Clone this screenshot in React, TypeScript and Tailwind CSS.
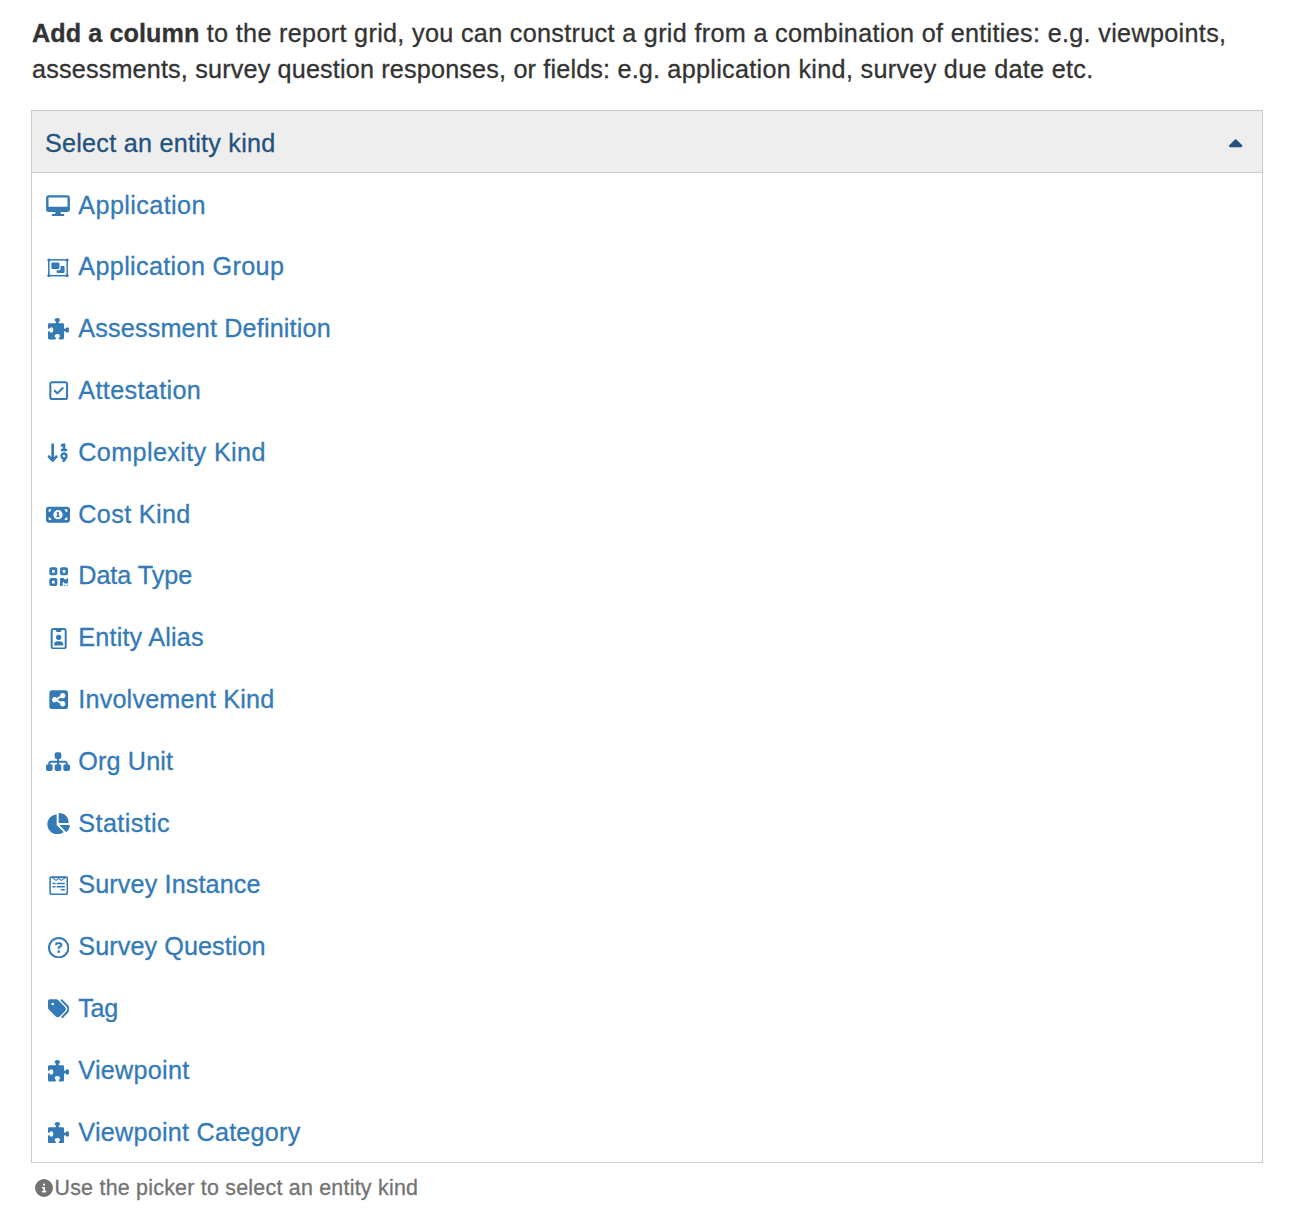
import { FaRegSquareCheck, FaArrowDown19, FaMoneyBill1, FaQrcode, FaRegIdBadge, FaSquareShareNodes, FaSitemap, FaChartPie, FaWpforms, FaRegCircleQuestion, FaTags, FaCircleInfo, FaCaretUp } from "react-icons/fa6";

type IconProps = { className?: string };

function Desktop({ className }: IconProps) {
  return (
    <svg viewBox="0 0 24 21.4" className={className} fill="currentColor">
      <path
        fillRule="evenodd"
        d="M2.8 0.2H21.2A2.7 2.7 0 0 1 23.9 2.9V14.2A2.7 2.7 0 0 1 21.2 16.9H2.8A2.7 2.7 0 0 1 0.1 14.2V2.9A2.7 2.7 0 0 1 2.8 0.2ZM2.5 2.6V11.7H21.5V2.6Z"
      />
      <path d="M9.6 16.5H14.4L14.9 19H17.2A1.1 1.1 0 0 1 17.2 21.2H6.8A1.1 1.1 0 0 1 6.8 19H9.1Z" />
    </svg>
  );
}

function ObjectGroup({ className }: IconProps) {
  return (
    <svg viewBox="0 0 24 21.4" className={className} fill="currentColor">
      <rect x="2.8" y="2.9" width="18.4" height="15.8" fill="none" stroke="currentColor" strokeWidth="1.5" />
      <circle cx="2.9" cy="3" r="1.6" />
      <circle cx="21.1" cy="3" r="1.6" />
      <circle cx="2.9" cy="18.6" r="1.6" />
      <circle cx="21.1" cy="18.6" r="1.6" />
      <rect x="5.4" y="5.4" width="8" height="6.7" rx="1.2" />
      <path d="M14.6 9.1H17.4A1.2 1.2 0 0 1 18.6 10.3V14.8A1.2 1.2 0 0 1 17.4 16H11.8A1.2 1.2 0 0 1 10.6 14.8V13.3H13.2A1.4 1.4 0 0 0 14.6 11.9Z" />
    </svg>
  );
}

function Puzzle({ className }: IconProps) {
  return (
    <svg viewBox="0 0 512 512" className={className} fill="currentColor">
      <path d="M512 288c0 35.35-21.49 64-48 64c-32.43 0-31.72-32-55.64-32C394.9 320 384 330.9 384 344.4V480c0 17.67-14.33 32-32 32h-71.64C266.9 512 256 501.1 256 487.6C256 463.1 288 464.4 288 432c0-26.51-28.65-48-64-48s-64 21.49-64 48c0 32.43 32 31.72 32 55.64C192 501.1 181.1 512 167.6 512H32c-17.67 0-32-14.33-32-32v-135.6C0 330.9 10.91 320 24.36 320C48.05 320 47.6 352 80 352C106.5 352 128 323.3 128 288S106.5 224 80 224c-32.43 0-31.72 32-55.64 32C10.91 256 0 245.1 0 231.6v-71.64c0-17.67 14.33-32 32-32h135.6C181.1 128 192 117.1 192 103.6c0-23.69-32-23.24-32-55.64c0-26.51 28.65-48 64-48s64 21.49 64 48c0 32.43-32 31.72-32 55.64c0 13.45 10.91 24.36 24.36 24.36H352c17.67 0 32 14.33 32 32v71.64c0 13.45 10.91 24.36 24.36 24.36c23.69 0 23.24-32 55.64-32C490.5 224 512 252.7 512 288z" />
    </svg>
  );
}

const wide = "h-[21.4px] w-[24px]";
const square = "h-[21.4px] w-[21.4px]";

const kinds = [
  { name: "Application", Icon: Desktop, size: wide, tracking: "tracking-[0.39px]" },
  { name: "Application Group", Icon: ObjectGroup, size: wide, tracking: "tracking-[0.34px]" },
  { name: "Assessment Definition", Icon: Puzzle, size: square, tracking: "tracking-[0.16px]" },
  { name: "Attestation", Icon: FaRegSquareCheck, size: square, tracking: "tracking-[0.35px]" },
  { name: "Complexity Kind", Icon: FaArrowDown19, size: wide, tracking: "tracking-[0.37px]" },
  { name: "Cost Kind", Icon: FaMoneyBill1, size: wide, tracking: "tracking-[0.35px]" },
  { name: "Data Type", Icon: FaQrcode, size: square, tracking: "tracking-[-0.06px]" },
  { name: "Entity Alias", Icon: FaRegIdBadge, size: square, tracking: "tracking-[0.18px]" },
  { name: "Involvement Kind", Icon: FaSquareShareNodes, size: square, tracking: "tracking-[0.18px]" },
  { name: "Org Unit", Icon: FaSitemap, size: wide, tracking: "tracking-[0.14px]" },
  { name: "Statistic", Icon: FaChartPie, size: wide, tracking: "tracking-[0.4px]" },
  { name: "Survey Instance", Icon: FaWpforms, size: square, tracking: "tracking-[0.12px]" },
  { name: "Survey Question", Icon: FaRegCircleQuestion, size: square, tracking: "tracking-[0.08px]" },
  { name: "Tag", Icon: FaTags, size: square, tracking: "tracking-[-0.3px]" },
  { name: "Viewpoint", Icon: Puzzle, size: square, tracking: "tracking-[0.27px]" },
  { name: "Viewpoint Category", Icon: Puzzle, size: square, tracking: "tracking-[0.24px]" },
];

export default function App() {
  return (
    <div className="h-[1208px] bg-white pl-[31px] pr-[27px] pt-[15px] font-['Liberation_Sans',sans-serif] text-[25.2px] leading-[36px] text-[#333] [-webkit-text-stroke:0.3px]">
      <p className="ml-px whitespace-nowrap">
        <b className="tracking-[0.08px]">Add a column</b>
        <span className="tracking-[0.32px]"> to the report grid, you can construct a grid from a combination of entities: e.g. viewpoints,</span>
        <br />
        <span className="tracking-[0.17px]">assessments, survey question responses, or fields: e.g. </span>
        <span className="tracking-[0.31px]">application kind, survey due date etc.</span>
      </p>
      <div className="mt-[23px] border border-[#ccc]">
        <div className="flex h-[62px] items-center justify-between border-b border-[#ccc] bg-[#eee] pl-[13px] pr-[15.5px] pt-[2px] text-[#23527c]">
          <span className="tracking-[0.24px]">Select an entity kind</span>
          <FaCaretUp className="mt-[4px] h-[21.4px] w-[21.4px]" />
        </div>
        <ul className="grid h-[989px] grid-rows-16">
          {kinds.map(({ name, Icon, size, tracking }) => (
            <li key={name} className="flex items-center gap-[6.5px] pl-[13px] pt-[1.3px] text-[#337ab7]">
              <span className="flex w-[26.8px] justify-center pt-[2px]">
                <Icon className={size} />
              </span>
              <span className={tracking}>{name}</span>
            </li>
          ))}
        </ul>
      </div>
      <div className="mt-[7px] flex items-center gap-[2px] pl-[3.5px] text-[21.4px] text-[#737373]">
        <FaCircleInfo className="h-[18px] w-[18px]" />
        <span className="tracking-[0.24px]">Use the picker to select an entity kind</span>
      </div>
    </div>
  );
}
